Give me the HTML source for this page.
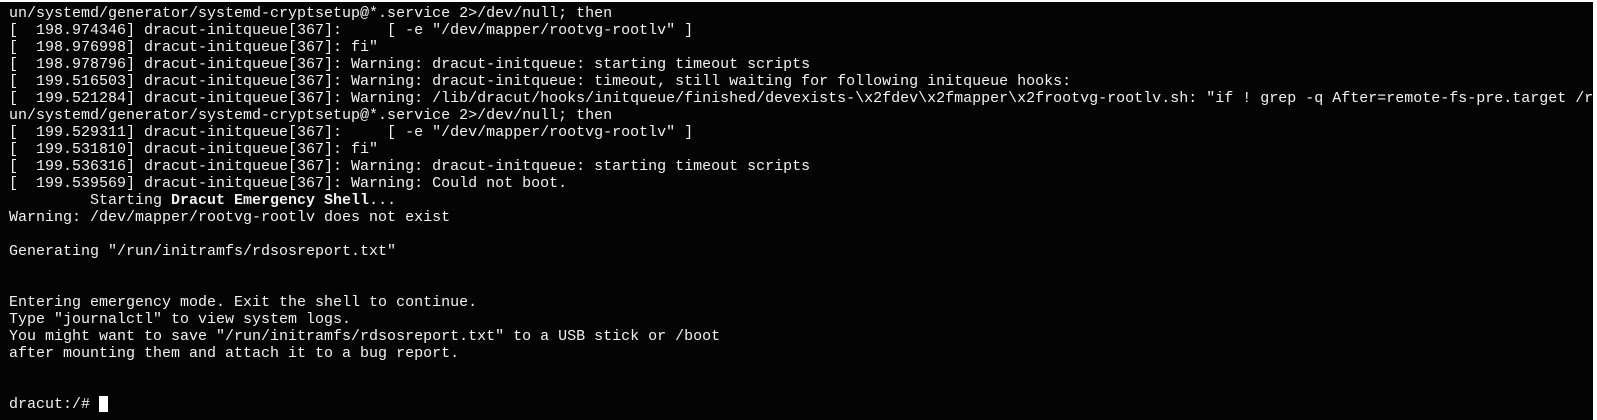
<!DOCTYPE html>
<html><head><meta charset="utf-8"><style>
html,body{margin:0;padding:0;background:#fff;width:1597px;height:420px;overflow:hidden}
.scr{position:absolute;left:0;top:2px;width:1593px;height:418px;background:#040404}
pre{margin:0;position:absolute;left:9px;top:5px;font-family:"Liberation Mono","Courier New",monospace;font-size:15px;line-height:17px;color:#f2f2f2;white-space:pre}
b{font-weight:bold}
.cur{display:inline-block;width:9px;height:16px;background:#fff;vertical-align:-4px}
</style></head><body><div class="scr"></div><pre>un/systemd/generator/systemd-cryptsetup@*.service 2&gt;/dev/null; then
[  198.974346] dracut-initqueue[367]:     [ -e "/dev/mapper/rootvg-rootlv" ]
[  198.976998] dracut-initqueue[367]: fi"
[  198.978796] dracut-initqueue[367]: Warning: dracut-initqueue: starting timeout scripts
[  199.516503] dracut-initqueue[367]: Warning: dracut-initqueue: timeout, still waiting for following initqueue hooks:
[  199.521284] dracut-initqueue[367]: Warning: /lib/dracut/hooks/initqueue/finished/devexists-\x2fdev\x2fmapper\x2frootvg-rootlv.sh: "if ! grep -q After=remote-fs-pre.target /r
un/systemd/generator/systemd-cryptsetup@*.service 2&gt;/dev/null; then
[  199.529311] dracut-initqueue[367]:     [ -e "/dev/mapper/rootvg-rootlv" ]
[  199.531810] dracut-initqueue[367]: fi"
[  199.536316] dracut-initqueue[367]: Warning: dracut-initqueue: starting timeout scripts
[  199.539569] dracut-initqueue[367]: Warning: Could not boot.
         Starting <b>Dracut Emergency Shell</b>...
Warning: /dev/mapper/rootvg-rootlv does not exist

Generating "/run/initramfs/rdsosreport.txt"


Entering emergency mode. Exit the shell to continue.
Type "journalctl" to view system logs.
You might want to save "/run/initramfs/rdsosreport.txt" to a USB stick or /boot
after mounting them and attach it to a bug report.


dracut:/# <span class="cur"></span></pre></body></html>
